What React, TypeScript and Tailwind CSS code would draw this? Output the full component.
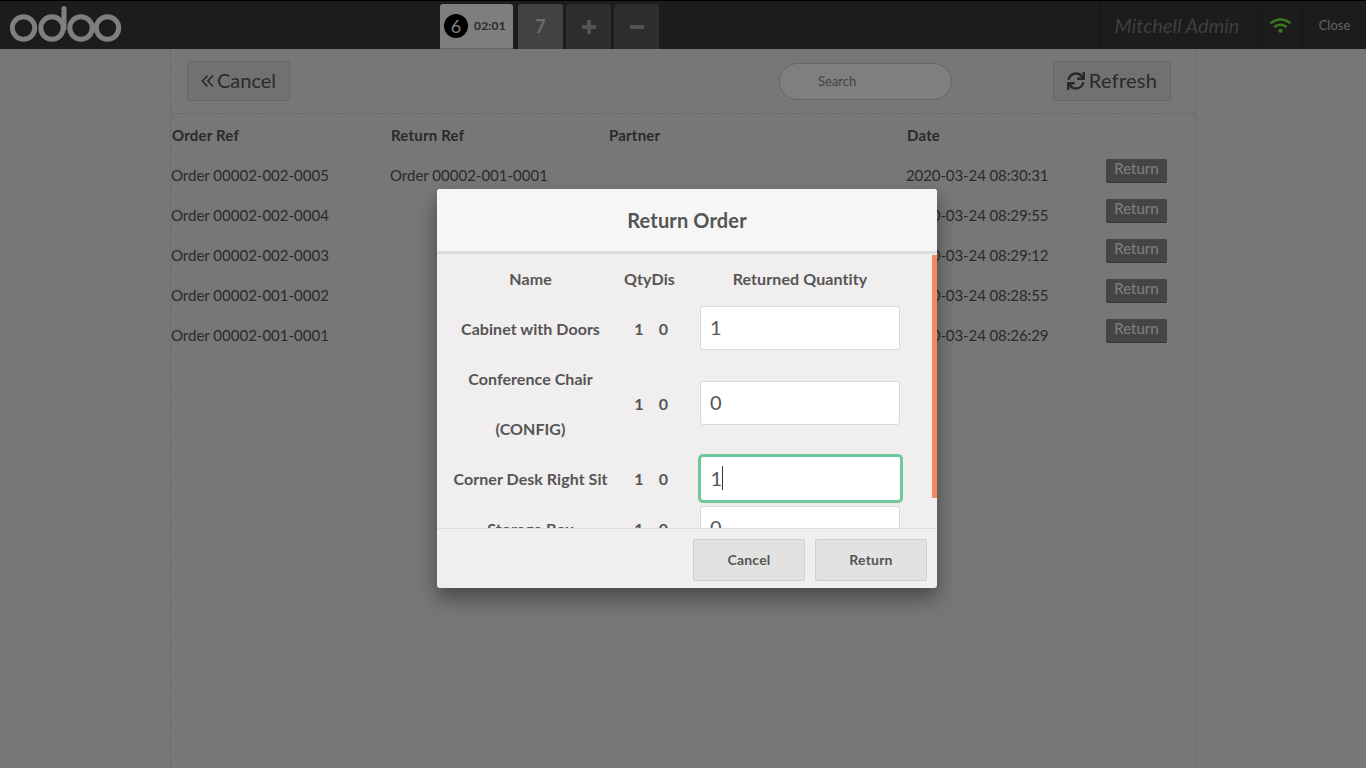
import { FaSync, FaWifi } from "react-icons/fa";

const orders = [
  ["Order 00002-002-0005", "Order 00002-001-0001", "2020-03-24 08:30:31"],
  ["Order 00002-002-0004", "", "2020-03-24 08:29:55"],
  ["Order 00002-002-0003", "", "2020-03-24 08:29:12"],
  ["Order 00002-001-0002", "", "2020-03-24 08:28:55"],
  ["Order 00002-001-0001", "", "2020-03-24 08:26:29"],
];

function Logo() {
  return (
    <svg width="112" height="40" viewBox="0 0 112 40" fill="none" stroke="#ffffff" strokeWidth="5">
      <circle cx="13.5" cy="24" r="11.2" />
      <circle cx="42" cy="24" r="11.2" />
      <path d="M54 4.5v19.5" strokeLinecap="round" />
      <circle cx="71" cy="24" r="11.2" />
      <circle cx="97.5" cy="24" r="11.2" />
    </svg>
  );
}

function Row({ name, v, h = "h-[50px]", focused = false }: { name: React.ReactNode; v: string; h?: string; focused?: boolean }) {
  return (
    <div className={`grid grid-cols-[187px_30px_19px_254px] items-center text-center ${h}`}>
      <div className="leading-[50px] tracking-[0.05px]">{name}</div>
      <div>1</div>
      <div>0</div>
      <div className="mb-[2px] flex justify-center">
        {focused ? (
          <div className="flex h-[49px] w-[205px] items-center rounded-[5px] border-[3px] border-[#6ec89b] bg-white pl-[10px] text-left text-[20px] font-normal">
            {v}
            <span className="h-[24px] w-px bg-[#333]" />
          </div>
        ) : (
          <div className="flex h-[44px] w-[200px] items-center rounded-[3px] border border-[#d9d9d9] bg-white pb-[2px] pl-[9px] text-left text-[20px] font-normal">
            {v}
          </div>
        )}
      </div>
    </div>
  );
}

export default function App() {
  return (
    <div className="relative flex h-[768px] w-[1366px] flex-col overflow-hidden bg-[#f0eeee] font-['Lato','Liberation_Sans',sans-serif] text-[#555555]">
      <header className="flex h-[49px] shrink-0 items-stretch border-t border-black bg-[#393939]">
        <div className="w-[440px] pl-[10px] pt-[3px]">
          <Logo />
        </div>
        <div className="flex items-end pt-[3px]">
          <div className="flex h-[45px] w-[73px] items-center rounded-t-[3px] border-b border-[#cfcfcf] bg-[#fdfdfd] pl-[4px]">
            <span className="flex h-[24px] w-[24px] items-center justify-center rounded-full bg-black text-[18px] font-normal text-white">6</span>
            <span className="ml-[6px] text-[12px] font-bold tracking-[0.2px]">02:01</span>
          </div>
          <div className="ml-[5px] flex h-[45px] w-[45px] items-center justify-center rounded-t-[3px] bg-[#858585] text-[18px] font-bold text-[#d8d8d8]">7</div>
          <div className="ml-[3px] flex h-[45px] w-[45px] items-center justify-center rounded-t-[3px] bg-[#5c5c5c] text-[#a8a8a8]">
            <svg width="16" height="16" viewBox="0 0 16 16" fill="currentColor"><path d="M6 1h4v5h5v4h-5v5H6v-5H1V6h5z" /></svg>
          </div>
          <div className="ml-[3px] flex h-[45px] w-[45px] items-center justify-center rounded-t-[3px] bg-[#5c5c5c] text-[#a8a8a8]">
            <svg width="16" height="16" viewBox="0 0 16 16" fill="currentColor"><path d="M1 6h14v4H1z" /></svg>
          </div>
        </div>
        <div className="ml-auto flex items-stretch">
          <div className="flex w-[159px] items-center justify-center border-l border-[#2c2c2c] pr-[4px] text-[20px] font-normal italic text-[#7c7c7c]">Mitchell Admin</div>
          <div className="flex w-[44px] items-center justify-center border-l border-[#2c2c2c] text-[#7df03c]"><FaWifi size={21} /></div>
          <div className="flex w-[64px] items-center justify-center border-l border-[#2c2c2c] pt-px text-[13px] text-[#c4c4c4]">Close</div>
        </div>
      </header>

      <main className="ml-[170px] flex w-[1026px] flex-1 flex-col border-x border-dashed border-[#cfcfcf]">
        <div className="flex h-[65px] shrink-0 items-start border-b border-dashed border-[#cfcfcf] pl-[16px] pr-[24px] pt-[12px]">
          <button className="flex h-[40px] w-[103px] items-center justify-center gap-[3px] rounded-[3px] border border-[#cacaca] bg-[#e2e2e2] pb-[2px] text-[20px]">
            <svg className="mt-[2px]" width="13" height="16" viewBox="0 0 13 16" fill="none" stroke="currentColor" strokeWidth="1.7">
              <path d="M6.5 2.5L1.5 8l5 5.5M12 2.5L7 8l5 5.5" />
            </svg>
            Cancel
          </button>
          <div className="ml-[489px] mt-[2px] flex h-[37px] w-[173px] items-center rounded-full border border-[#cacaca] bg-white pl-[38px] text-[13px] text-[#8a8a8a]">Search</div>
          <button className="ml-auto flex h-[40px] w-[118px] items-center justify-center gap-[4px] rounded-[3px] border border-[#cacaca] bg-[#e2e2e2] pb-[2px] text-[20px] tracking-[0.25px]">
            <FaSync className="mt-[2px]" size={18} />Refresh
          </button>
        </div>
        <div className="grid grid-cols-[219px_218px_298px_200px_auto] pt-[11px] text-[15px]">
          <div className="h-[20px] pl-px font-bold leading-[20px] tracking-[0.2px]">Order Ref</div>
          <div className="h-[20px] pl-px font-bold leading-[20px] tracking-[0.2px]">Return Ref</div>
          <div className="h-[20px] pl-px font-bold leading-[20px] tracking-[0.2px]">Partner</div>
          <div className="h-[20px] pl-px font-bold leading-[20px] tracking-[0.2px]">Date</div>
          <div />
          {orders.map((o) => (
            <div key={o[0]} className="col-span-5 grid h-[40px] grid-cols-subgrid items-center [&:nth-child(6)]:mt-[10px]">
              <div>{o[0]}</div>
              <div>{o[1]}</div>
              <div />
              <div className="tracking-[-0.1px]">{o[2]}</div>
              <div className="mb-[8px] h-[24px] w-[61px] rounded-[2px] border-b border-[#6a6a6a] bg-[#8a8a8a] text-center text-[15px] leading-[18px] text-[#ffffff]">Return</div>
            </div>
          ))}
        </div>
      </main>

      <div className="absolute inset-0 flex items-center justify-center bg-black/50 pl-[8px] pt-[8px]">
        <div className="flex h-[399px] w-[500px] flex-col overflow-hidden rounded-[3px] bg-[#f0eeee] shadow-[0_10px_20px_rgba(0,0,0,0.4)]">
          <div className="flex h-[65px] shrink-0 items-center justify-center border-b-[3px] border-[#dedede] bg-[#f6f6f6] pt-px text-[20px] font-bold tracking-[0.15px]">Return Order</div>
          <div className="relative h-[274px] shrink-0 overflow-hidden pt-[1px] text-[16px] font-bold">
            <div className="grid h-[49px] grid-cols-[187px_51px_250px] items-center text-center tracking-[0.1px]">
              <div>Name</div>
              <div>QtyDis</div>
              <div>Returned Quantity</div>
            </div>
            <Row name="Cabinet with Doors" v="1" />
            <Row name={<>Conference Chair<br />(CONFIG)</>} v="0" h="h-[100px]" />
            <Row name="Corner Desk Right Sit" v="1" focused />
            <Row name="Storage Box" v="0" />
            <div className="absolute right-0 top-[1px] h-[243px] w-[5px] bg-[#f08a5d]" />
          </div>
          <div className="flex flex-1 items-start justify-end gap-[10px] border-t border-[#dcdcdc] pr-[10px] pt-[10px] text-[14px] font-bold tracking-[0.2px]">
            <button className="h-[42px] w-[112px] rounded-[2px] border border-[#cfcfcf] bg-[#e2e2e2]">Cancel</button>
            <button className="h-[42px] w-[112px] rounded-[2px] border border-[#cfcfcf] bg-[#e2e2e2]">Return</button>
          </div>
        </div>
      </div>
    </div>
  );
}
